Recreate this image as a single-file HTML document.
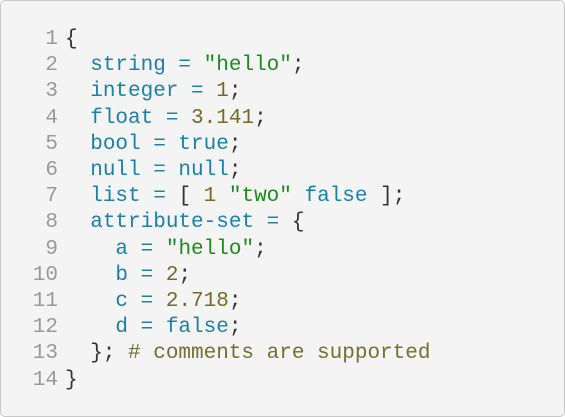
<!DOCTYPE html>
<html><head><style>
html,body{margin:0;padding:0;background:#fff;}
.box{position:absolute;left:0;top:0;width:563px;height:415px;border:1px solid #c8c8c8;border-radius:5px;background:#f4f4f4;}
pre{position:absolute;left:0;top:26px;margin:0;font-family:"Liberation Mono",monospace;font-size:21px;line-height:26.2px;color:#333;}
.n{display:inline-block;width:57px;text-align:right;color:#999;margin-right:7px;}
.k{color:#1a82a8}.s{color:#1e8a1e}.d{color:#75692a}.c{color:#75702e}
</style></head><body><div class="box"><pre><span class="n">1</span>{
<span class="n">2</span>  <span class="k">string =</span> <span class="s">"hello"</span>;
<span class="n">3</span>  <span class="k">integer =</span> <span class="d">1</span>;
<span class="n">4</span>  <span class="k">float =</span> <span class="d">3.141</span>;
<span class="n">5</span>  <span class="k">bool = true</span>;
<span class="n">6</span>  <span class="k">null = null</span>;
<span class="n">7</span>  <span class="k">list =</span> [ <span class="d">1</span> <span class="s">"two"</span> <span class="k">false</span> ];
<span class="n">8</span>  <span class="k">attribute-set =</span> {
<span class="n">9</span>    <span class="k">a =</span> <span class="s">"hello"</span>;
<span class="n">10</span>    <span class="k">b =</span> <span class="d">2</span>;
<span class="n">11</span>    <span class="k">c =</span> <span class="d">2.718</span>;
<span class="n">12</span>    <span class="k">d = false</span>;
<span class="n">13</span>  }; <span class="c"># comments are supported</span>
<span class="n">14</span>}</pre></div></body></html>
